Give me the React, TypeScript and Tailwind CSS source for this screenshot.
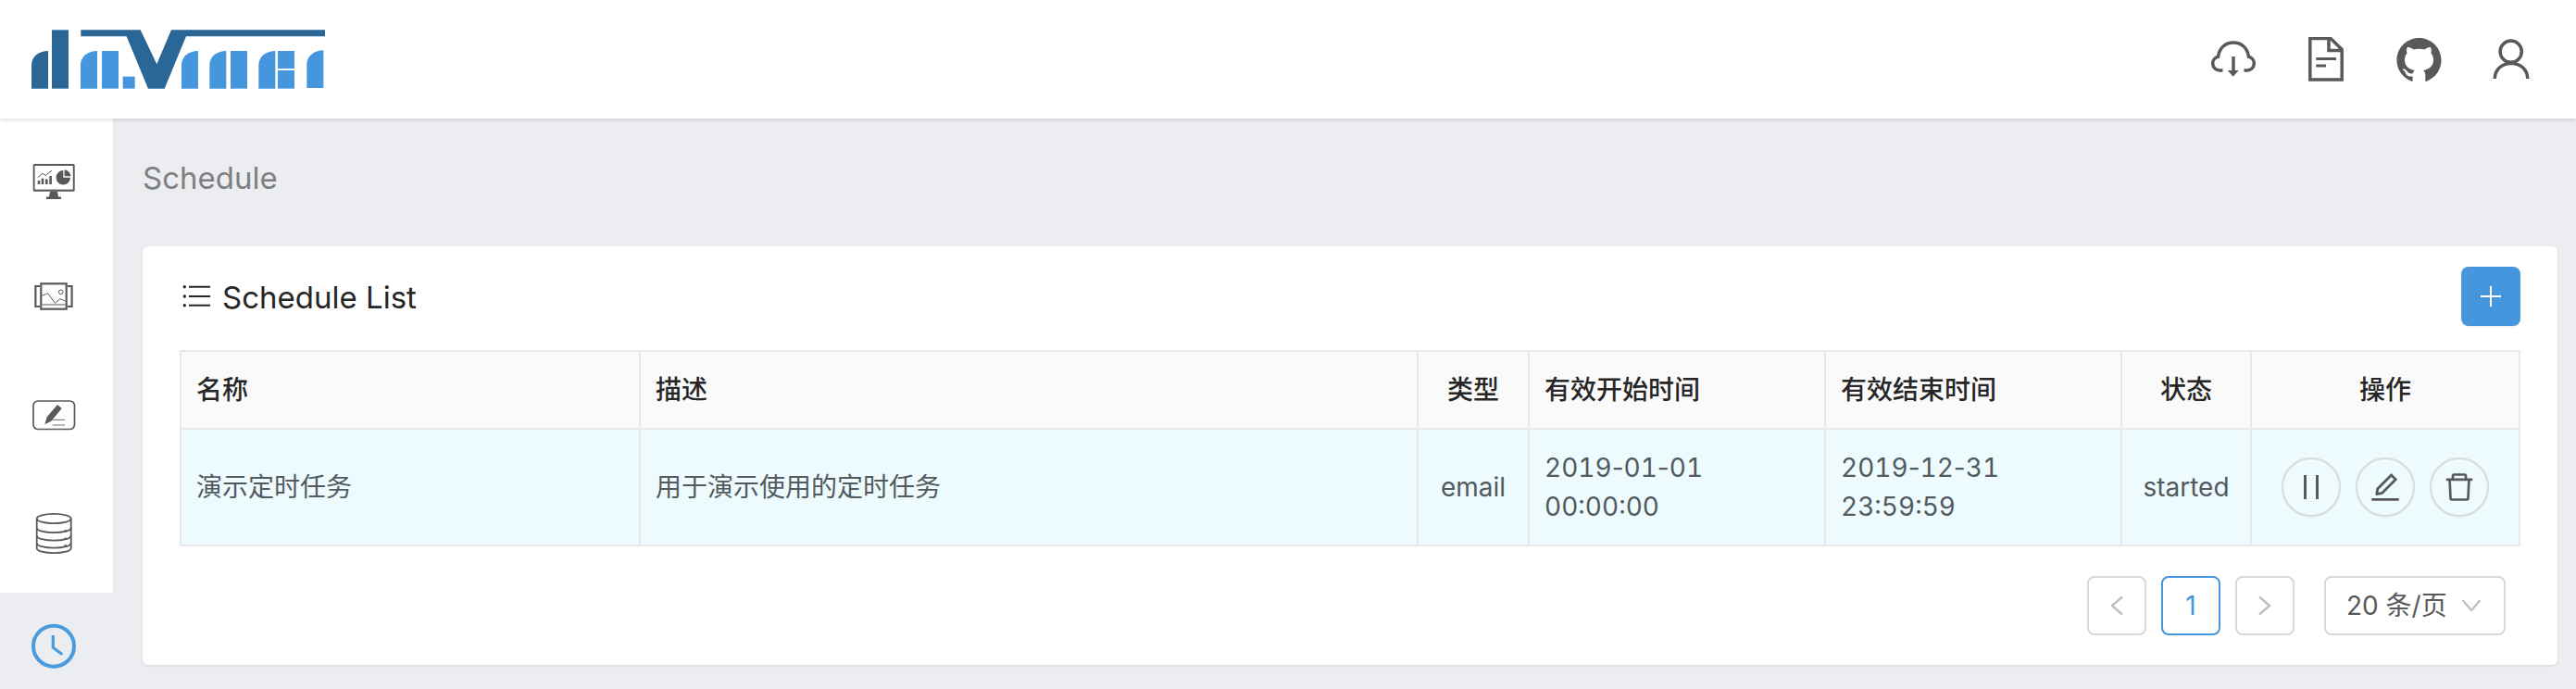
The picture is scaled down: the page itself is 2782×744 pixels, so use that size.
import React from 'react';
import { AiFillGithub, AiOutlineDelete, AiOutlineEdit } from 'react-icons/ai';

const DARK = '#2a6796';
const LIGHT = '#4596dc';

// logo is drawn in 3x coordinates, taken straight from the reference
function Logo() {
  return (
    <svg width="420" height="128" viewBox="0 0 1260 384" className="shrink-0">
      <g fill={DARK}>
        <path d="M102 287V210C102 185 125 165 156 165V287Z" />
        <rect x="168" y="97" width="54" height="190" />
        <path d="M262 97H455L508 208L555 97H1053V118H603L533 287H480L410 118H262Z" />
      </g>
      <g fill={LIGHT}>
        <path d="M261 287V210C261 185 284 165 315 165V287Z" />
        <rect x="330" y="165" width="54" height="122" />
        <rect x="398" y="248" width="39" height="39" />
        <path d="M588 287V210C588 185 611 165 642 165V287Z" />
        <path d="M679 287V210C679 185 702 165 733 165V287Z" />
        <rect x="747" y="165" width="54" height="122" />
        <path d="M838 287V210C838 185 861 165 892 165V287Z" />
        <rect x="900" y="165" width="54" height="57" />
        <rect x="900" y="228" width="54" height="59" />
        <path d="M994 285V208C994 183 1017 163 1048 163V285Z" />
      </g>
    </svg>
  );
}

const CloudIcon = () => (
  <svg width="48" height="48" viewBox="0 0 48 48" fill="none" stroke="#595959" strokeWidth="3.5">
    <path d="M12.5 36H9a7.5 7.5 0 0 1-1.5-14.8C9 11 16 6 24 6s15 5 16.5 15.2A7.5 7.5 0 0 1 39 36h-3.5" />
    <path d="M24 21V36" />
    <path d="M17.7 36H29.7L23.7 42.7Z" fill="#595959" stroke="none" />
  </svg>
);

const FileIcon = () => (
  <svg width="48" height="48" viewBox="0 0 48 48" fill="none" stroke="#595959" strokeWidth="3.5">
    <path d="M6.8 1.5H29L41.2 13.5V46H6.8Z" />
    <path d="M27 1.5V14.5H41" />
    <path d="M13.3 23.5H35M13.3 31H24" strokeWidth="3" />
  </svg>
);

const UserIcon = () => (
  <svg width="48" height="48" viewBox="0 0 48 48" fill="none" stroke="#595959" strokeWidth="3.5">
    <circle cx="23.7" cy="15.7" r="11.6" />
    <path d="M6.3 45C6.3 35 14 28.5 24 28.5S41.7 35 41.7 45" />
  </svg>
);

const MonitorIcon = () => (
  <svg width="64" height="64" viewBox="0 0 64 64">
    <rect x="9.7" y="17" width="45" height="29.7" rx="1.5" fill="#595959" />
    <rect x="11.6" y="19" width="41.2" height="25.6" fill="#fff" />
    <path d="M28 46.7H36L37 52.5H40V55H24V52.5H27Z" fill="#595959" />
    <g fill="#595959">
      <rect x="14.7" y="35" width="2.6" height="4" />
      <rect x="18.7" y="32.7" width="2.6" height="6.3" />
      <rect x="23" y="33.5" width="2.6" height="5.5" />
      <rect x="27.3" y="30" width="2.6" height="9" />
      <path d="M42.3 24A7.7 7.7 0 1 0 50 31.7H42.3Z" />
      <path d="M43.6 23.2A7.7 7.7 0 0 1 50.4 30.2H43.6Z" />
    </g>
    <path d="M14.7 31.7L20 27.3L23.3 29.3L30 24" fill="none" stroke="#595959" strokeWidth="1" />
  </svg>
);

const GalleryIcon = () => (
  <svg width="64" height="64" viewBox="0 0 64 64" fill="none" stroke="#595959">
    <rect x="18.3" y="18.3" width="27.4" height="27.4" strokeWidth="2.2" />
    <path d="M17 21H12.4V43H17M47 21H51.6V43H47" strokeWidth="2.2" />
    <path d="M19.5 31.3L25.7 28.7L33.3 39.3L39 34.7L44.5 37" strokeWidth="1" />
    <path d="M19.5 41H44.5" strokeWidth="1" />
    <circle cx="39.7" cy="27.3" r="2.3" strokeWidth="1" />
  </svg>
);

const SketchIcon = () => (
  <svg width="64" height="64" viewBox="0 0 64 64" fill="none" stroke="#595959">
    <rect x="10" y="17" width="44.5" height="30.5" rx="5" strokeWidth="1.7" />
    <path d="M22.3 42.3L24.7 34.3L36 21L40.7 25L29.3 38.7Z" fill="#595959" stroke="none" />
    <path d="M30.7 37.3H44M30.7 43H44" strokeWidth="0.9" />
  </svg>
);

const DatabaseIcon = () => (
  <svg width="64" height="64" viewBox="0 0 64 64" fill="none" stroke="#595959" strokeWidth="1.8">
    <ellipse cx="32.2" cy="16" rx="18.5" ry="5.2" />
    <path d="M13.7 16V48C13.7 51 22 53.2 32.2 53.2S50.7 51 50.7 48V16" />
    <path d="M13.7 26C13.7 29 22 31.2 32.2 31.2S50.7 29 50.7 26" />
    <path d="M13.7 34.5C13.7 37.5 22 39.7 32.2 39.7S50.7 37.5 50.7 34.5" />
    <path d="M13.7 42.5C13.7 45.5 22 47.7 32.2 47.7S50.7 45.5 50.7 42.5" />
    <g fill="#595959" stroke="none">
      <circle cx="44.7" cy="29.3" r="1.3" />
      <circle cx="44.7" cy="37.7" r="1.3" />
      <circle cx="44.7" cy="45.3" r="1.3" />
    </g>
  </svg>
);

const ClockIcon = () => (
  <svg width="64" height="64" viewBox="0 0 64 64" fill="none" stroke="#4a9ade" strokeWidth="4">
    <circle cx="32" cy="25.7" r="22" />
    <path d="M31.3 14V27.3L41.3 34.7" strokeWidth="3.2" />
  </svg>
);

const ListIcon = () => (
  <svg width="32" height="32" viewBox="0 0 32 32" fill="none" stroke="#262626" strokeWidth="2">
    <path d="M8 5.7H31M8 16H31M8 25.7H31" />
    <g fill="#262626" stroke="none">
      <circle cx="3.3" cy="5.7" r="1.7" />
      <circle cx="3.3" cy="16" r="1.7" />
      <circle cx="3.3" cy="25.7" r="1.7" />
    </g>
  </svg>
);

const PauseIcon = () => (
  <svg width="28" height="28" viewBox="0 0 28 28" fill="#595959">
    <rect x="6" y="1" width="3" height="26" />
    <rect x="19" y="1" width="3" height="26" />
  </svg>
);

const Chevron = ({ d, w, h }: { d: string; w: number; h: number }) => (
  <svg width={w} height={h} viewBox={`0 0 ${w} ${h}`} fill="none" stroke="#bfbfbf" strokeWidth="2.4">
    <path d={d} />
  </svg>
);

// digits are tabular, the hyphens stay at their natural width
const Hyphen = () => <span className="normal-nums">-</span>;

const navIcons = [
  <MonitorIcon key="viz" />,
  <GalleryIcon key="display" />,
  <SketchIcon key="widget" />,
  <DatabaseIcon key="source" />,
];

const headCell = 'h-[84px] border-r-2 border-b-2 border-[#e8e8e8] bg-[#fafafa] px-4 text-[28px] font-medium text-[#262626]';
const bodyCell = 'h-[126px] border-r-2 border-b-2 border-[#e8e8e8] bg-[#edfbff] px-4 text-[28px] leading-[42px] text-[#525a5d] tabular-nums';
const actionBtn = 'flex h-[64px] w-[64px] items-center justify-center rounded-full border-2 border-[#d9d9d9] shadow-[0_2px_0_rgba(0,0,0,0.015)]';
const pageBtn = 'flex h-[64px] w-[64px] items-center justify-center rounded-lg border-2 border-[#d9d9d9] bg-white';

export default function App() {
  return (
    <div className="flex h-[744px] flex-col overflow-hidden bg-[#ebedf1] font-['Inter','Noto_Sans_CJK_SC',sans-serif]">
      {/* top bar */}
      <header className="relative z-10 flex h-[128px] shrink-0 items-center justify-between bg-white pr-[20px] shadow-[0_2px_4px_rgba(0,0,0,0.12)]">
        <Logo />
        <div className="flex">
          <div className="flex h-[100px] w-[100px] items-center justify-center"><CloudIcon /></div>
          <div className="flex h-[100px] w-[100px] items-center justify-center"><FileIcon /></div>
          <div className="flex h-[100px] w-[100px] items-center justify-center"><AiFillGithub size={55} color="#595959" /></div>
          <div className="flex h-[100px] w-[100px] items-center justify-center"><UserIcon /></div>
        </div>
      </header>

      <div className="flex min-h-0 flex-1">
        {/* side nav */}
        <nav className="w-[122px] shrink-0">
          {navIcons.map((icon, i) => (
            <div key={i} className="flex h-[128px] items-center justify-center bg-white pr-[6px]">{icon}</div>
          ))}
          <div className="flex h-[128px] items-center justify-center pr-[6px]"><ClockIcon /></div>
        </nav>

        <main className="min-w-0 flex-1 pr-[20px] pl-[32px]">
          <div className="h-[138px] pt-[40px] text-[33px] leading-[48px] text-[#7f7f7f]">Schedule</div>

          <section className="h-[452px] rounded-md bg-white px-[40px] shadow-[0_1px_3px_rgba(0,0,0,0.1)]">
            <div className="flex h-[112px] items-start justify-between pt-[22px]">
              <div className="flex h-[64px] items-center pl-[2px]">
                <ListIcon />
                <h2 className="mt-[4px] ml-[12px] text-[33px] text-[#262626]">Schedule List</h2>
              </div>
              <button className="flex h-[64px] w-[64px] items-center justify-center rounded-lg bg-[#4596dc] shadow-[0_2px_0_rgba(0,0,0,0.045)]">
                <svg width="24" height="24" viewBox="0 0 24 24" stroke="#fff" strokeWidth="2"><path d="M12 1V23M1 12H23" /></svg>
              </button>
            </div>

            <div className="border-t-2 border-l-2 border-[#e8e8e8]">
              <table className="w-full table-fixed border-separate border-spacing-0">
                <colgroup>
                  <col className="w-[496px]" />
                  <col className="w-[840px]" />
                  <col className="w-[120px]" />
                  <col className="w-[320px]" />
                  <col className="w-[320px]" />
                  <col className="w-[140px]" />
                  <col className="w-[290px]" />
                </colgroup>
                <thead>
                  <tr>
                    <th className={`${headCell} text-left`}>名称</th>
                    <th className={`${headCell} text-left`}>描述</th>
                    <th className={`${headCell} text-center`}>类型</th>
                    <th className={`${headCell} text-left`}>有效开始时间</th>
                    <th className={`${headCell} text-left`}>有效结束时间</th>
                    <th className={`${headCell} text-center`}>状态</th>
                    <th className={`${headCell} text-center`}>操作</th>
                  </tr>
                </thead>
                <tbody>
                  <tr>
                    <td className={bodyCell}>演示定时任务</td>
                    <td className={bodyCell}>用于演示使用的定时任务</td>
                    <td className={`${bodyCell} text-center`}>email</td>
                    <td className={bodyCell}>2019<Hyphen />01<Hyphen />01<br />00:00:00</td>
                    <td className={bodyCell}>2019<Hyphen />12<Hyphen />31<br />23:59:59</td>
                    <td className={`${bodyCell} text-center`}>started</td>
                    <td className={bodyCell}>
                      <div className="flex justify-center gap-[16px]">
                        <button className={actionBtn}><PauseIcon /></button>
                        <button className={actionBtn}><AiOutlineEdit size={38} color="#595959" /></button>
                        <button className={actionBtn}><AiOutlineDelete size={38} color="#595959" /></button>
                      </div>
                    </td>
                  </tr>
                </tbody>
              </table>
            </div>

            <div className="flex justify-end pt-[32px] pr-[16px]">
              <div className="flex gap-[16px]">
                <button className={pageBtn}><Chevron w={16} h={22} d="M14 1.5L3 11L14 20.5" /></button>
                <button className="flex h-[64px] w-[64px] items-center justify-center rounded-lg border-2 border-[#4596dc] bg-white text-[28px] text-[#4596dc]">1</button>
                <button className={pageBtn}><Chevron w={16} h={22} d="M2 1.5L13 11L2 20.5" /></button>
              </div>
              <div className="ml-[32px] flex h-[64px] w-[196px] items-center justify-between rounded-lg border-2 border-[#d9d9d9] bg-white pr-[24px] pl-[22px] text-[28px] text-[#595959]">
                <span>20 条/页</span>
                <Chevron w={22} h={16} d="M1.5 2L11 13L20.5 2" />
              </div>
            </div>
          </section>
        </main>
      </div>
    </div>
  );
}
